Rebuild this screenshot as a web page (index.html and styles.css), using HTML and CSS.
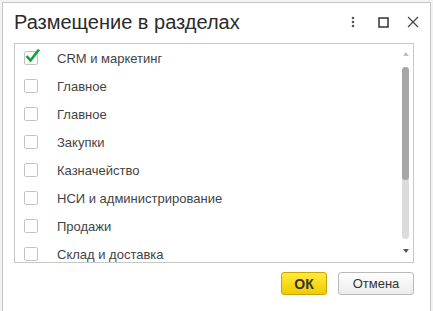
FILE: index.html
```html
<html>
    <head>
        <title>Размещение в разделах</title>
        <link rel="stylesheet" href="styles.css">
    </head>
    <body>
        <div class="window">
            <div class="titlebar">
                <h2 class="title">Размещение в разделах</h2>
                <div class="tb-icons">
                    <span class="tb-btn">
                        <svg width="4" height="12" viewBox="0 0 4 12"><circle cx="2" cy="2" r="1.3" fill="#555"/><circle cx="2" cy="6" r="1.3" fill="#555"/><circle cx="2" cy="10" r="1.3" fill="#555"/></svg>
                    </span>
                    <span class="tb-btn">
                        <svg width="11" height="11" viewBox="0 0 11 11"><rect x="1" y="1" width="9" height="9" fill="none" stroke="#333" stroke-width="1.5"/></svg>
                    </span>
                    <span class="tb-btn">
                        <svg width="12" height="12" viewBox="0 0 12 12"><path d="M1 1 L11 11 M11 1 L1 11" stroke="#444" stroke-width="1.2" fill="none"/></svg>
                    </span>
                </div>
            </div>

            <div class="list">
                <div class="items">
                    <div class="row">
                        <span class="check checked">
                            <svg width="18" height="18" viewBox="0 0 18 18"><path d="M2.5 8 L6.5 12.5 L15 1.5" stroke="#13a23a" stroke-width="2.6" fill="none"/></svg>
                        </span>
                        <span class="label">CRM и маркетинг</span>
                    </div>
                    <div class="row"><span class="check"></span><span class="label">Главное</span></div>
                    <div class="row"><span class="check"></span><span class="label">Главное</span></div>
                    <div class="row"><span class="check"></span><span class="label">Закупки</span></div>
                    <div class="row"><span class="check"></span><span class="label">Казначейство</span></div>
                    <div class="row"><span class="check"></span><span class="label">НСИ и администрирование</span></div>
                    <div class="row"><span class="check"></span><span class="label">Продажи</span></div>
                    <div class="row"><span class="check"></span><span class="label">Склад и доставка</span></div>
                </div>
                <div class="scrollbar">
                    <div class="sb-up"><span class="arrow-up"></span></div>
                    <div class="sb-track"><div class="sb-thumb"></div></div>
                    <div class="sb-down"><span class="arrow-down"></span></div>
                </div>
            </div>

            <div class="buttons">
                <button class="btn btn-ok">ОК</button>
                <button class="btn">Отмена</button>
            </div>
        </div>
    </body>
</html>
```

FILE: styles.css
```css
body {
    font-family: "Liberation Sans", Arial, sans-serif;
    background-color: #f3f3f3;
    margin: 0;
    padding: 2px 0 0 2px;
    overflow: hidden;
    height: 311px;
    box-sizing: border-box;
}

.window {
    width: 429px;
    height: 309px;
    box-sizing: border-box;
    background-color: #fff;
    border: 1px solid #c4c4c4;
    border-bottom: none;
}

.titlebar {
    display: flex;
    height: 40px;
    padding-left: 11px;
    padding-right: 2px;
}

.title {
    flex: 1;
    margin: 0;
    padding-top: 8px;
    font-size: 20px;
    line-height: 23px;
    font-weight: normal;
    color: #2b2b2b;
}

.tb-icons {
    display: flex;
    margin-top: 11px;
}

.tb-btn {
    width: 30px;
    height: 16px;
    display: flex;
    justify-content: center;
    align-items: center;
}

/* list of sections */
.list {
    display: flex;
    margin: 0 16px 0 11px;
    height: 220px;
    box-sizing: border-box;
    border: 1px solid #c8c8c8;
    overflow: hidden;
}

.items {
    flex: 1;
}

.row {
    display: flex;
    align-items: center;
    height: 28px;
    padding-left: 9px;
}

.check {
    position: relative;
    width: 14px;
    height: 14px;
    box-sizing: border-box;
    border: 1px solid #c4c4c4;
    border-radius: 2px;
    margin-right: 19px;
    flex-shrink: 0;
}

.check svg {
    position: absolute;
    left: -1px;
    top: -4px;
}

.label {
    font-size: 13px;
    color: #444;
}

.scrollbar {
    width: 14px;
    display: flex;
    flex-direction: column;
}

.sb-up {
    height: 20px;
    display: flex;
    justify-content: center;
    align-items: center;
}

.arrow-up {
    width: 0;
    height: 0;
    border-left: 3px solid transparent;
    border-right: 3px solid transparent;
    border-bottom: 4px solid #c0c0c0;
}

.sb-track {
    margin: 3px 0 0 3px;
    width: 7px;
    height: 172px;
    border-radius: 4px;
    background-color: #dcdcdc;
}

.sb-thumb {
    height: 113px;
    border-radius: 4px;
    background-color: #a6a6a6;
}

.sb-down {
    flex: 1;
    display: flex;
    justify-content: center;
    align-items: center;
}

.arrow-down {
    width: 0;
    height: 0;
    border-left: 3px solid transparent;
    border-right: 3px solid transparent;
    border-top: 4px solid #555;
}

.buttons {
    display: flex;
    justify-content: flex-end;
    gap: 11px;
    margin: 9px 16px 0 0;
}

.btn {
    height: 23px;
    padding: 0 12px;
    font-family: "Liberation Sans", Arial, sans-serif;
    font-size: 13px;
    color: #333;
    background: linear-gradient(#ffffff, #ececec);
    border: 1px solid #b9b9b9;
    border-radius: 3px;
    width: 76px;
}

.btn-ok {
    width: 46px;
    font-weight: bold;
    font-size: 14px;
    background: linear-gradient(#ffea3d, #f0cc00);
    border-color: #c8a600;
}
```
